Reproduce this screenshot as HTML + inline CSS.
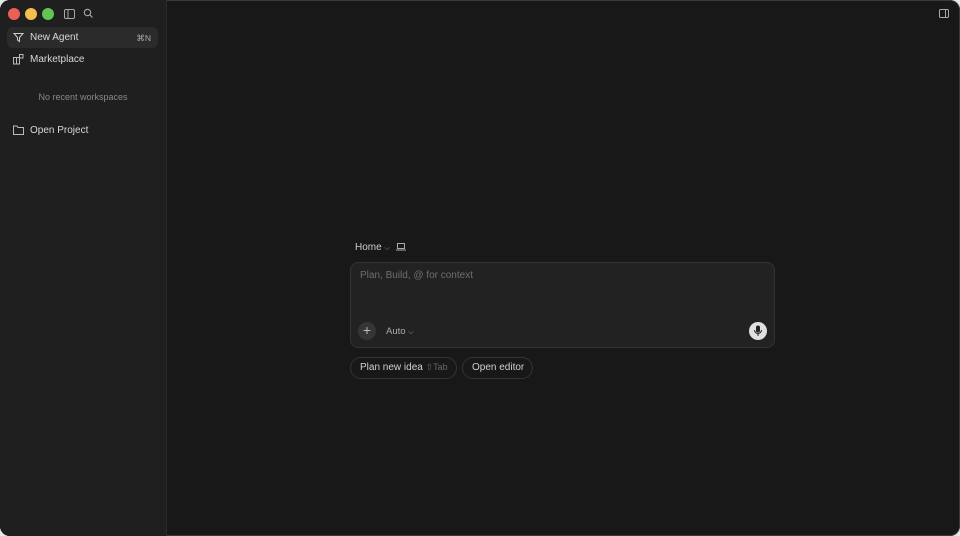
<!DOCTYPE html>
<html><head><style>
html,body{margin:0;width:960px;height:536px;background:#e8e8e8;overflow:hidden;font-family:"Liberation Sans",sans-serif}
.win{position:absolute;left:0;top:0;width:960px;height:536px;border-radius:10px;background:#181818;overflow:hidden;box-shadow:inset 0 0 0 1px #3a3a3a}
.side{position:absolute;left:0;top:0;width:166px;height:536px;background:#1f1f1f;border-right:1px solid #2a2a2a}
.dot{position:absolute;top:8px;width:12px;height:12px;border-radius:50%}
.item{position:absolute;left:7px;width:151px;height:21px;border-radius:6px;color:#d8d8d8;font-size:10px;line-height:22px}
.item span{position:absolute;left:23px}
.item svg{position:absolute;left:6px;top:5px}
.t{position:absolute;font-size:10px;color:#d0d0d0}
</style></head><body>
<div class="win">
<div class="side">
 <div class="dot" style="left:8px;background:#ec5f59"></div>
 <div class="dot" style="left:25px;background:#f4bf4f"></div>
 <div class="dot" style="left:42px;background:#61c454"></div>
 <svg style="position:absolute;left:64px;top:9px" width="11" height="10" viewBox="0 0 11 10"><rect x="0.5" y="0.5" width="10" height="9" rx="1.5" fill="none" stroke="#aaa"/><line x1="4" y1="0.5" x2="4" y2="9.5" stroke="#aaa"/></svg>
 <svg style="position:absolute;left:83px;top:8px" width="11" height="11" viewBox="0 0 11 11"><circle cx="4.5" cy="4.5" r="3.2" fill="none" stroke="#aaa" stroke-width="1.1"/><line x1="7" y1="7" x2="9.5" y2="9.5" stroke="#aaa" stroke-width="1.1"/></svg>
 <div class="item" style="top:27px;background:#2b2b2b"><svg width="11" height="11" viewBox="0 0 11 11"><path d="M1 1.5h9L6.5 5.5V9.5L4.5 8V5.5Z" fill="none" stroke="#ccc" stroke-width="1"/></svg><span>New Agent</span><b style="position:absolute;right:7px;font-weight:normal;font-size:8.5px;color:#aaa">⌘N</b></div>
 <div class="item" style="top:49px"><svg width="11" height="11" viewBox="0 0 11 11"><rect x="0.5" y="3.5" width="6" height="6.5" fill="none" stroke="#bbb"/><line x1="3.5" y1="3.5" x2="3.5" y2="10" stroke="#bbb"/><rect x="6.5" y="0.5" width="3.5" height="3.5" fill="none" stroke="#bbb"/></svg><span>Marketplace</span></div>
 <div class="t" style="left:0;width:166px;text-align:center;top:92px;font-size:9px;color:#888">No recent workspaces</div>
 <div class="item" style="top:120px"><svg width="11" height="10" viewBox="0 0 11 10"><path d="M0.5 1h3.5l1 1.5h5.5v7h-10z" fill="none" stroke="#bbb"/></svg><span>Open Project</span></div>
</div>
<svg style="position:absolute;left:939px;top:9px" width="10" height="9" viewBox="0 0 10 9"><rect x="0.5" y="0.5" width="9" height="8" rx="1.2" fill="none" stroke="#aaa"/><line x1="6.5" y1="0.5" x2="6.5" y2="8.5" stroke="#aaa"/></svg>
<div class="t" style="left:355px;top:242px;color:#ccc">Home <span style="font-size:7px;color:#999">⌵</span></div>
<svg style="position:absolute;left:396px;top:243px" width="10" height="8" viewBox="0 0 10 8"><rect x="1.5" y="0.5" width="7" height="5" fill="none" stroke="#aaa"/><line x1="0" y1="7" x2="10" y2="7" stroke="#aaa"/></svg>
<div style="position:absolute;left:350px;top:262px;width:423px;height:84px;border-radius:8px;background:#222;border:1px solid #333"></div>
<div class="t" style="left:360px;top:270px;color:#6e6e6e">Plan, Build, @ for context</div>
<div style="position:absolute;left:358px;top:322px;width:18px;height:18px;border-radius:50%;background:#353535;color:#bbb;font-size:14px;line-height:17px;text-align:center">+</div>
<div class="t" style="left:386px;top:326px;color:#aaa;font-size:9.5px">Auto <span style="font-size:7px">⌵</span></div>
<div style="position:absolute;left:749px;top:322px;width:18px;height:18px;border-radius:50%;background:#e0e0e0"></div>
<svg style="position:absolute;left:753px;top:325px" width="10" height="12" viewBox="0 0 10 12"><rect x="3" y="0.5" width="4" height="7" rx="2" fill="#222"/><path d="M1.5 5a3.5 3.5 0 0 0 7 0M5 8.5v2.5" fill="none" stroke="#222"/></svg>
<div style="position:absolute;left:350px;top:357px;width:105px;height:20px;border:1px solid #333;border-radius:11px"></div>
<div class="t" style="left:360px;top:362px">Plan new idea <span style="color:#666;font-size:9px">⇧Tab</span></div>
<div style="position:absolute;left:462px;top:357px;width:69px;height:20px;border:1px solid #333;border-radius:11px"></div>
<div class="t" style="left:472px;top:362px">Open editor</div>
</div>
</body></html>
